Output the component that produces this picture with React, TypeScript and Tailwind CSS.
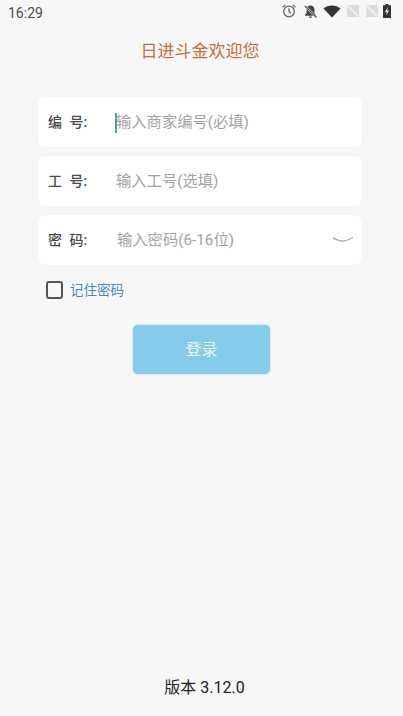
import type { ReactNode } from "react";

const font = "font-['Roboto','Noto_Sans_CJK_SC',sans-serif]";

function StatusIcons() {
  return (
    <div className="flex items-center">
      <svg width="16" height="16" viewBox="0 0 15 15" fill="none" stroke="#666" strokeWidth="1.200">
        <circle cx="7.500" cy="8" r="5" />
        <path d="M7.500 5v3.200l2 1.200M1.500 4L4 1.800M13.500 4L11 1.800" />
      </svg>
      <svg width="15" height="15" viewBox="0 0 15 15" fill="#444" className="ml-[6px]">
        <path d="M7.500 1.500c-2.400 0-4 1.800-4 4.200v3.600L2 11v.8h11V11l-1.500-1.700V5.700c0-2.400-1.600-4.200-4-4.200zM6 12.600h3a1.500 1.500 0 0 1-3 0z" />
        <path d="M2 2l11.500 11.500" stroke="#f7f7f7" strokeWidth="2.400" />
        <path d="M2 2l11.500 11.500" stroke="#444" strokeWidth="1.100" />
      </svg>
      <svg width="18" height="13" viewBox="0 0 17 13" fill="#333" className="ml-[5px]">
        <path d="M0 3.500C2.300 1.500 5.200.5 8.500.5s6.200 1 8.500 3L8.500 12.500z" />
      </svg>
      <svg width="12" height="12" viewBox="0 0 12 12" className="ml-[6px]">
        <path d="M0 0h12v12H0z" fill="#dcdcdc" />
        <path d="M1 1l10 10" stroke="#f7f7f7" strokeWidth="1.500" />
      </svg>
      <svg width="12" height="12" viewBox="0 0 12 12" className="ml-[7px]">
        <path d="M0 0h12v12H0z" fill="#dcdcdc" />
        <path d="M1 1l10 10" stroke="#f7f7f7" strokeWidth="1.500" />
      </svg>
      <svg width="8" height="14" viewBox="0 0 8 14" className="ml-[5px]">
        <path d="M2.500 0h3v1.200H8V14H0V1.200h2.500z" fill="#333" />
        <path d="M4.800 3L2 8h1.800l-.6 3.500L6 6.500H4.200z" fill="#f7f7f7" />
      </svg>
    </div>
  );
}

function Field({ label, children }: { label: ReactNode; children: ReactNode }) {
  return (
    <div className="flex h-[50px] items-center rounded-[7px] bg-white pl-[10px] pr-[9px] shadow-[0_0_3px_rgba(0,0,0,0.03)]">
      <span className="w-[68px] shrink-0 text-[14px] font-medium text-[#4a4a4a] [word-spacing:4px]">{label}</span>
      {children}
    </div>
  );
}

export default function App() {
  return (
    <div className={`${font} flex h-[716px] w-[403px] flex-col overflow-hidden bg-[#f7f7f7]`}>
      <div className="flex h-[22px] shrink-0 items-center justify-between pl-[8px] pr-[12px]">
        <span className="pt-[3px] text-[14px] leading-[18px] text-[#4d4d4d]">16:29</span>
        <StatusIcons />
      </div>

      <h1 className="mt-[18px] pr-[3px] text-center text-[17px] font-normal leading-[22px] text-[#c0703a]">
        日进斗金欢迎您
      </h1>

      <div className="ml-[38px] mr-[41px] mt-[35px] flex flex-col gap-[9px]">
        <Field label="编 号:">
          <div className="flex items-center pt-[1px] text-[15.3px] text-[#a3a3a3]">
            <span className="-ml-[1px] h-[20px] w-[2px] bg-[#4aa5a5]" />
            <span className="-ml-[1px]">输入商家编号(必填)</span>
          </div>
        </Field>
        <Field label="工 号:">
          <span className="pt-[1px] text-[15.3px] text-[#a3a3a3]">输入工号(选填)</span>
        </Field>
        <Field label="密 码:">
          <span className="flex-1 pl-[1px] text-[15.3px] text-[#a3a3a3]">输入密码(6-16位)</span>
          <svg width="20" height="8" viewBox="0 0 20 8" fill="none" stroke="#aaa" strokeWidth="1.300">
            <path d="M0 2c3 .5 4 3 9.500 3S16 3 20 1.500" />
          </svg>
        </Field>
      </div>

      <label className="ml-[46px] mt-[15px] flex items-center gap-[7px]">
        <span className="h-[18px] w-[17px] rounded-[3px] border-2 border-[#555]" />
        <span className="text-[13.5px] text-[#4a8ab8]">记住密码</span>
      </label>

      <button className="mx-auto mt-[25px] h-[49px] w-[137px] rounded-[5px] bg-[#85cbea] text-[16px] text-[#e8f6fb] shadow-[0_0_2px_rgba(70,130,170,0.4)]">
        登录
      </button>

      <div className="mt-auto mb-[18px] pl-[6px] text-center text-[16px] leading-[20px] text-[#222]">版本 3.12.0</div>
    </div>
  );
}
